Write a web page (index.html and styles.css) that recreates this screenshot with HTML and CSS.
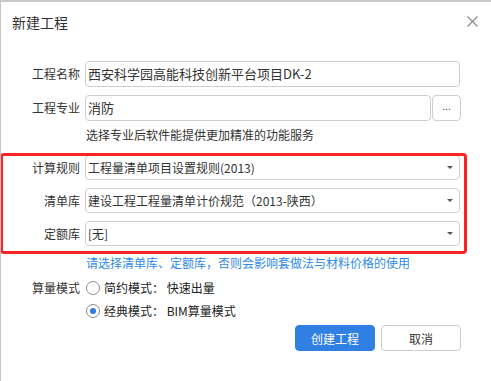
FILE: index.html
```html
<!DOCTYPE html>
<html lang="zh-CN">
<head>
<meta charset="utf-8">
<link rel="stylesheet" href="styles.css">
</head>
<body>
<div class="dialog">
  <div class="header">
    <span class="title">新建工程</span>
    <svg class="close" width="11" height="11" viewBox="0 0 11 11"><path d="M0.5 0.5 L10.5 10.5 M10.5 0.5 L0.5 10.5" stroke="#8a8a8a" stroke-width="1.2" fill="none"/></svg>
  </div>
  <div class="form">
    <div class="row">
      <label class="label">工程名称</label>
      <div class="input">西安科学园高能科技创新平台项目DK-2</div>
    </div>
    <div class="row row2">
      <label class="label">工程专业</label>
      <div class="input short">消防</div>
      <div class="more">...</div>
    </div>
    <div class="hint">选择专业后软件能提供更加精准的功能服务</div>
    <div class="selects">
      <div class="row srow">
        <label class="label">计算规则</label>
        <div class="select"><span>工程量清单项目设置规则(2013)</span><i class="caret"></i></div>
      </div>
      <div class="row srow">
        <label class="label">清单库</label>
        <div class="select"><span>建设工程工程量清单计价规范（2013-陕西）</span><i class="caret"></i></div>
      </div>
      <div class="row srow">
        <label class="label">定额库</label>
        <div class="select"><span>[无]</span><i class="caret"></i></div>
      </div>
      <div class="redbox"></div>
    </div>
    <div class="hint blue">请选择清单库、定额库，否则会影响套做法与材料价格的使用</div>
    <div class="row rrow first">
      <label class="label">算量模式</label>
      <span class="radio"></span>
      <span class="rtext">简约模式：&nbsp;快速出量</span>
    </div>
    <div class="row rrow">
      <span class="label"></span>
      <span class="radio checked"></span>
      <span class="rtext">经典模式：&nbsp;BIM算量模式</span>
    </div>
    <div class="buttons">
      <button class="btn primary">创建工程</button>
      <button class="btn">取消</button>
    </div>
  </div>
</div>
</body>
</html>
```
FILE: styles.css
```css
* { box-sizing: border-box; }
html, body { margin: 0; padding: 0; background: #fff; }
body {
  font-family: "Noto Sans CJK SC", "Microsoft YaHei", sans-serif;
  color: #333;
  font-size: 12px;
}
.dialog {
  width: 491px;
  height: 381px;
  border-top: 2px solid #c8c8c8;
  border-left: 1px solid #c4c4c4;
  background: #fff;
  position: relative;
  overflow: hidden;
}
.header {
  height: 40px;
  display: flex;
  align-items: center;
  justify-content: space-between;
  padding-left: 11px;
  padding-right: 13px;
}
.title { font-size: 14px; color: #333; line-height: 20px; }
.close { display: block; margin-top: -2px; }
.form { padding-top: 19px; }
.row {
  display: flex;
  align-items: center;
  height: 26px;
}
.row2 { margin-top: 8px; }
.label {
  width: 79px;
  flex: none;
  text-align: right;
  margin-right: 5px;
  font-size: 12px;
  line-height: 16px;
  color: #333;
}
.input {
  width: 375px;
  height: 26px;
  border: 1px solid #cfcfcf;
  border-radius: 4px;
  padding-left: 2px;
  font-size: 13px;
  line-height: 24px;
  color: #333;
  white-space: nowrap;
}
.input.short { width: 346px; }
.more {
  width: 29px;
  height: 26px;
  margin-left: 1px;
  border: 1px solid #cfcfcf;
  border-radius: 4px;
  font-size: 10px;
  text-align: center;
  line-height: 20px;
  color: #444;
}
.hint {
  margin-top: 7px;
  padding-left: 85px;
  font-size: 12px;
  line-height: 14px;
  white-space: nowrap;
}
.blue { color: #2f8ae6; margin-top: 10px; }
.selects {
  position: relative;
  margin-top: 13px;
  display: flex;
  flex-direction: column;
  gap: 8px;
}
.srow { height: 25px; }
.select {
  width: 375px;
  height: 25px;
  border: 1px solid #cfcfcf;
  border-radius: 4px;
  padding-left: 2px;
  padding-right: 6px;
  display: flex;
  align-items: center;
  justify-content: space-between;
  font-size: 12px;
  line-height: 23px;
  white-space: nowrap;
}
.caret {
  width: 0;
  height: 0;
  border-left: 3px solid transparent;
  border-right: 3px solid transparent;
  border-top: 3px solid #555;
}
.redbox {
  position: absolute;
  left: -1px;
  top: -2px;
  width: 467px;
  height: 101px;
  border: 3px solid #fb2424;
  border-radius: 4px;
  pointer-events: none;
}
.rrow { height: 20px; margin-top: 3px; }
.rrow.first { margin-top: 8px; }
.radio {
  width: 14px;
  height: 14px;
  border: 1px solid #8c8c8c;
  border-radius: 50%;
  margin-left: 1px;
  margin-right: 4px;
  flex: none;
  position: relative;
  background: #fff;
}
.radio.checked::after {
  content: "";
  position: absolute;
  left: 3px;
  top: 3px;
  width: 6px;
  height: 6px;
  border-radius: 50%;
  background: #2b7de0;
}
.rtext { font-size: 12px; line-height: 16px; color: #222; white-space: nowrap; }
.buttons {
  display: flex;
  justify-content: flex-end;
  gap: 6px;
  padding-right: 30px;
  margin-top: 4px;
}
.btn {
  width: 80px;
  height: 26px;
  border: 1px solid #cdcdcd;
  border-radius: 4px;
  background: #fff;
  font-family: inherit;
  font-size: 12px;
  color: #333;
  padding: 0;
}
.btn.primary {
  background: #2f80e2;
  border-color: #2f80e2;
  color: #fff;
}
```
